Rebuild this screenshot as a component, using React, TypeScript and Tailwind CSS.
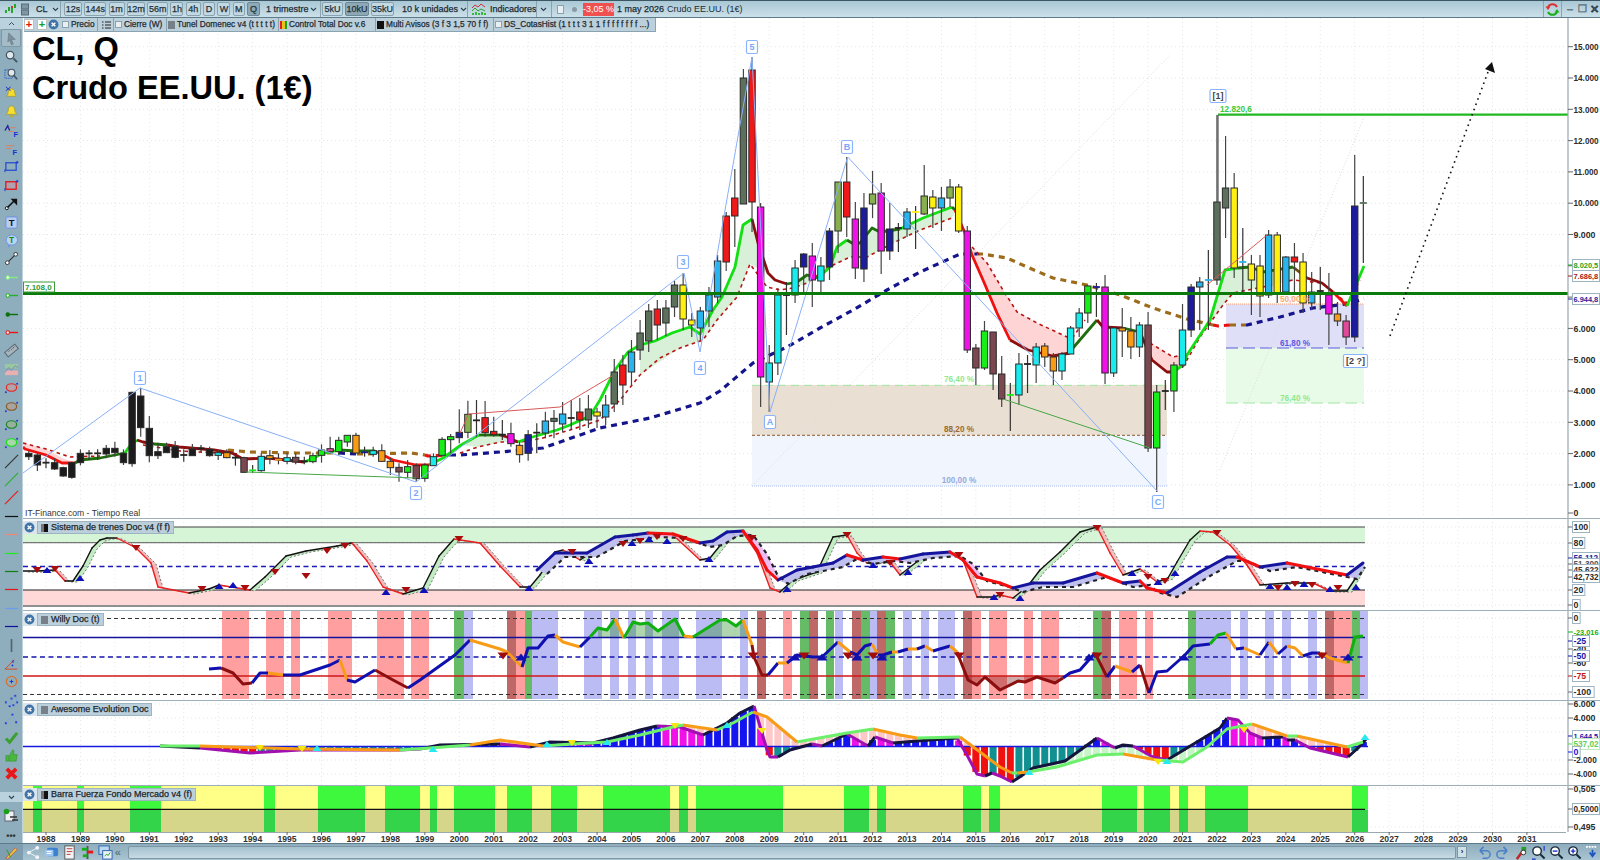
import React from "react";

type P = number[];
const X = (i: number) => 46 + i * 8.61;
const YEARX = (y: number) => 46 + (y - 1988) * 34.44;
const C: Record<string, string> = { k: "#1c1c1c", r: "#f01818", g: "#17ee17", c: "#18ecec", b: "#1c1c9c", m: "#f010e8", y: "#fff010", o: "#f89c18", l: "#28b4ec", d: "#5c705c", D: "#88b050", M: "#7c4850", p: "#e04a98" };

const Z10: [number, number, number, number, string][] = [
  [483, 490, 500, 510, "k"], [490, 495, 525, 543, "k"], [505, 518, 521, 535, "k"], [505, 518, 537, 540, "k"], [530, 533, 558, 560, "k"], [515, 518, 562, 566, "k"], [478, 490, 518, 526, "k"], [480, 490, 491, 510, "k"], [478, 490, 491, 510, "k"], [465, 475, 492, 505, "k"], [455, 475, 488, 500, "k"], [478, 490, 518, 525, "k"], [305, 307, 521, 530, "k"], [293, 318, 413, 440, "k"], [378, 415, 497, 517, "k"], [458, 485, 497, 507, "k"], [458, 470, 488, 488, "k"], [453, 470, 502, 505, "k"], [478, 495, 498, 515, "k"], [462, 477, 497, 497, "k"], [465, 475, 476, 485, "k"], [470, 478, 497, 500, "k"],
  [480, 488, 496, 510, "c"], [478, 488, 503, 505, "o"], [490, 503, 505, 527, "k"], [500, 503, 547, 547, "M"], [525, 541, 547, 549, "g"], [490, 499, 542, 545, "c"], [480, 497, 506, 523, "o"], [490, 509, 512, 523, "o"], [488, 503, 514, 523, "c"], [490, 502, 516, 523, "M"], [500, 514, 517, 523, "k"], [488, 497, 515, 520, "g"], [463, 480, 496, 518, "g"], [440, 476, 485, 490, "p"], [440, 451, 485, 495, "g"], [435, 436, 456, 470, "g"], [428, 436, 489, 490, "o"], [470, 487, 493, 500, "b"], [470, 482, 493, 500, "c"], [463, 482, 514, 515, "o"], [503, 514, 533, 555, "o"], [520, 532, 546, 575, "M"], [510, 530, 547, 565, "g"], [520, 527, 566, 575, "M"], [520, 525, 565, 575, "g"], [490, 500, 527, 527, "c"], [442, 448, 496, 500, "g"], [432, 440, 449, 490, "g"], [358, 427, 443, 460, "b"], [332, 373, 427, 445, "D"], [330, 391, 393, 440, "k"], [333, 383, 428, 440, "r"], [380, 424, 434, 440, "r"], [390, 434, 436, 450, "k"], [398, 431, 461, 470, "m"], [455, 466, 494, 518, "o"], [420, 434, 490, 512, "b"], [400, 428, 431, 490, "k"], [365, 393, 429, 445, "l"], [360, 385, 394, 445, "d"],
];
const REST: [number, number, number, number, string][] = [
  [402, 414, 424, 432, "l"], [400, 418, 419, 430, "k"], [398, 412, 420, 430, "r"], [395, 409, 420, 428, "d"], [408, 412, 416, 428, "y"], [395, 405, 417, 425, "l"], [359, 372, 404, 412, "d"], [355, 365, 385, 405, "r"], [340, 352, 372, 385, "l"], [320, 333, 350, 360, "d"], [304, 311, 341, 352, "d"], [300, 309, 325, 340, "r"], [300, 308, 323, 336, "d"],
  [281, 285, 307, 317, "d"], [273, 285, 319, 330, "y"], [313, 320, 325, 337, "y"], [307, 311, 328, 340, "l"], [287, 295, 311, 327, "l"], [255, 261, 297, 303, "l"], [212, 216, 262, 271, "r"], [169, 198, 216, 247, "r"], [69, 78, 204, 204, "d"], [57, 70, 202, 232, "r"], [203, 207, 377, 407, "m"], [345, 363, 382, 412, "c"], [288, 295, 363, 375, "c"], [282, 295, 296, 335, "k"], [260, 268, 295, 303, "c"], [253, 254, 267, 295, "b"], [243, 256, 280, 307, "m"], [257, 266, 281, 292, "c"],
  [228, 231, 267, 280, "b"], [182, 182, 231, 253, "D"], [157, 182, 217, 237, "r"], [202, 219, 268, 279, "m"], [193, 208, 269, 282, "b"], [171, 194, 204, 218, "D"], [183, 193, 251, 274, "m"], [203, 229, 251, 260, "b"], [223, 228, 230, 252, "k"], [208, 212, 229, 237, "l"], [206, 212, 214, 249, "y"], [165, 196, 214, 215, "D"], [190, 197, 208, 228, "y"], [187, 198, 208, 231, "l"], [179, 187, 198, 207, "D"], [184, 187, 231, 233, "y"], [226, 231, 350, 353, "m"],
  [344, 348, 368, 385, "M"], [321, 331, 368, 370, "g"], [332, 332, 374, 390, "M"], [356, 374, 399, 407, "M"], [383, 395, 397, 431, "g"], [353, 364, 395, 405, "c"], [355, 364, 365, 393, "k"], [343, 347, 365, 383, "c"], [343, 346, 357, 367, "o"], [353, 357, 371, 385, "o"], [352, 354, 371, 380, "c"], [326, 328, 354, 345, "c"], [308, 313, 328, 337, "c"], [285, 286, 313, 323, "g"], [283, 287, 288, 317, "b"], [275, 287, 373, 384, "m"], [327, 328, 373, 377, "c"], [308, 328, 331, 357, "o"], [317, 331, 347, 359, "o"], [322, 325, 347, 357, "c"], [312, 325, 448, 452, "M"], [385, 392, 448, 492, "g"], [380, 391, 392, 410, "k"], [362, 365, 391, 412, "g"], [304, 330, 365, 368, "c"],
  [284, 287, 330, 337, "b"], [277, 282, 287, 330, "l"], [250, 280, 282, 330, "l"], [115, 202, 280, 285, "d"], [136, 188, 208, 238, "d"], [173, 188, 268, 278, "y"], [228, 262, 264, 295, "l"], [255, 264, 280, 315, "y"], [255, 266, 296, 317, "y"], [230, 235, 295, 298, "l"], [232, 235, 293, 303, "y"], [256, 257, 292, 294, "l"], [243, 257, 262, 293, "r"], [253, 262, 303, 313, "y"], [272, 292, 303, 310, "l"], [267, 291, 293, 310, "k"], [273, 295, 314, 345, "m"], [302, 314, 321, 326, "o"], [315, 321, 337, 345, "p"], [155, 206, 337, 342, "b"], [176, 203, 205, 263, "d"],
];
const CANDLES = [...Z10.map(([a, b, c, d, e]) => [290 + a / 3, 290 + b / 3, 290 + c / 3, 290 + d / 3, e] as [number, number, number, number, string]), ...REST];

const DG = "#1f6e0c", DR = "#8c0f0f", GR = "#12e012", RD = "#f01010", BR = "#6b4a10";
const TUNNEL: [string, P][] = [
  [RD, [23, 447, 25, 449, 46, 455, 62, 463, 75, 463]], [DG, [80, 460, 100, 458, 125, 453]], [GR, [129, 447, 137, 440]], [DR, [143, 442, 154, 444]], [DG, [168, 445]], [DR, [179, 447, 214, 450, 232, 453, 243, 459, 268, 458, 304, 462]], [GR, [314, 458, 321, 454, 339, 450]], [DG, [357, 451, 375, 451]], [RD, [393, 460, 416, 465, 429, 465]], [GR, [443, 458, 461, 445, 479, 435]], [DG, [500, 435]], [DR, [507, 437, 518, 442]], [GR, [529, 438, 557, 430, 570, 425, 590, 416, 600, 400, 615, 370, 628, 352, 640, 345, 655, 341, 672, 333, 690, 327, 700, 334, 713, 310, 722, 297, 735, 267, 743, 225, 752, 219]], [DR, [758, 243, 768, 273, 775, 280, 787, 284]], [DG, [797, 282, 807, 275, 818, 278]], [GR, [830, 267, 837, 247, 847, 240]], [DG, [852, 243, 860, 243, 872, 228, 880, 232, 900, 229]], [GR, [923, 218, 952, 207]], [DG, [955, 210]], [RD, [965, 233, 972, 255, 983, 280, 997, 313, 1010, 340]], [DR, [1028, 350, 1053, 356, 1070, 353]], [DG, [1073, 348, 1097, 320]], [DR, [1103, 327, 1123, 328]], [DG, [1140, 332]], [DR, [1152, 360, 1167, 372, 1173, 372]], [GR, [1183, 365, 1187, 355, 1210, 320, 1225, 270, 1238, 268]], [DG, [1250, 267, 1263, 272, 1293, 267]], [BR, [1307, 278]], [DR, [1322, 283, 1333, 292]], [RD, [1347, 306]], [GR, [1353, 292, 1364, 266]],
];
const TUN_D: P[] = [
  [23, 443, 46, 449, 70, 457, 100, 456], [143, 445, 180, 451, 240, 454], [460, 453, 478, 447, 500, 442, 521, 442, 543, 438, 570, 430, 600, 420, 620, 400, 640, 375, 660, 358, 680, 348, 703, 340, 717, 320, 737, 297, 750, 264, 767, 287, 780, 290, 793, 288, 807, 283, 827, 268, 850, 257, 867, 257, 893, 243, 920, 230, 952, 218],
  [972, 247, 987, 263, 1003, 290, 1017, 312, 1037, 323, 1067, 337, 1073, 337, 1085, 320], [1150, 343, 1173, 357, 1183, 355], [1183, 367, 1200, 337, 1210, 323, 1223, 305, 1233, 293, 1263, 287, 1293, 280, 1322, 283, 1347, 303, 1360, 280],
];
const FILLS: [string, P][] = [
  ["#d8efd8", [640, 345, 655, 341, 672, 333, 690, 327, 700, 334, 713, 310, 722, 297, 735, 267, 743, 225, 752, 219, 758, 243, 767, 273, 750, 264, 737, 297, 717, 320, 703, 340, 680, 348, 640, 375]],
  ["#d8efd8", [830, 267, 837, 247, 847, 240, 860, 243, 872, 228, 880, 232, 900, 229, 923, 218, 952, 207, 955, 210, 952, 218, 920, 230, 893, 243, 867, 257, 850, 257, 827, 268, 807, 283, 793, 288, 797, 282, 807, 275, 818, 278]],
  ["#ffd4d4", [972, 255, 983, 280, 997, 313, 1010, 340, 1028, 350, 1053, 356, 1070, 353, 1067, 337, 1037, 323, 1017, 312, 1003, 290, 987, 263, 973, 247]],
  ["#ffd4d4", [1152, 360, 1167, 372, 1173, 372, 1183, 365, 1183, 355, 1173, 357, 1150, 343]],
  ["#d8efd8", [1187, 355, 1210, 320, 1225, 270, 1238, 268, 1250, 267, 1263, 272, 1293, 267, 1293, 280, 1263, 287, 1233, 293, 1223, 305, 1210, 323, 1200, 337]],
  ["#ffd4d4", [1322, 283, 1333, 292, 1347, 306, 1360, 280, 1347, 303]],
  ["#d8efd8", [461, 445, 479, 435, 500, 435, 518, 442, 500, 442, 478, 447]],
  ["#ffd4d4", [23, 447, 46, 455, 62, 463, 75, 463, 62, 458, 46, 449, 23, 443]],
];
const NAVY = "#14148c";
const EMA: [string, P][] = [
  ["#9c6c1c", [228, 450, 250, 452, 296, 453, 339, 453]], [NAVY, [357, 454]], ["#9c6c1c", [411, 453, 425, 455]], ["#e81010", [428, 456, 450, 455]], [NAVY, [460, 455, 500, 452, 543, 448, 600, 428, 650, 418, 700, 403, 720, 391, 753, 363, 787, 347, 820, 328, 853, 310, 887, 290, 920, 272, 960, 254, 977, 254]], ["#9c6c1c", [983, 254, 1007, 258, 1027, 267, 1053, 278, 1087, 285, 1120, 295, 1153, 308, 1187, 319, 1213, 325]], ["#e81010", [1218, 326, 1230, 325]], ["#9c6c1c", [1246, 325]], [NAVY, [1247, 325, 1280, 317, 1313, 308, 1347, 304, 1364, 299]],
];

const poly = (p: P) => { const o: string[] = []; for (let i = 0; i < p.length; i += 2) o.push(p[i] + "," + p[i + 1]); return o.join(" "); };
const chainPts = (c: [string, P][]) => c.reduce<P>((a, s) => a.concat(s[1]), []);
function Chain({ items, w, dash }: { items: [string, P][]; w: number; dash?: string }) {
  let last: P = [];
  return <>{items.map(([col, pts], i) => { const all = [...last, ...pts]; last = pts.slice(-2); return <polyline key={i} points={poly(all)} fill="none" stroke={col} strokeWidth={w} strokeDasharray={dash} strokeLinejoin="round" />; })}</>;
}
function Tri({ x, y, c, up, s = 4.5 }: { x: number; y: number; c: string; up?: boolean; s?: number }) {
  const h = s * 1.3;
  return <polygon points={up ? `${x - s},${y + h / 2} ${x + s},${y + h / 2} ${x},${y - h / 2}` : `${x - s},${y - h / 2} ${x + s},${y - h / 2} ${x},${y + h / 2}`} fill={c} />;
}
function Grid({ top, bottom, ys }: { top: number; bottom: number; ys: number[] }) {
  const yrs: number[] = []; for (let y = 1988; y <= 2031; y++) yrs.push(y);
  return <g stroke="#e3e6e8" strokeWidth="1" strokeDasharray="1 3">
    {yrs.map((y) => <line key={y} x1={YEARX(y)} x2={YEARX(y)} y1={top} y2={bottom} />)}
    {ys.map((y) => <line key={y} x1="23" x2="1568" y1={y} y2={y} />)}
  </g>;
}
function Ax({ y, t, c = "#2c2c2c", box, tick = "#666", bold = true }: { y: number; t: string; c?: string; box?: string; tick?: string; bold?: boolean }) {
  const fs = t.length > 6 ? 7.4 : t.length === 6 ? 8.2 : 8.8;
  const w = t.length * fs * 0.53 + 3;
  return <g>
    <line x1="1568" x2="1573" y1={y} y2={y} stroke={tick} strokeWidth="1" />
    {box && <rect x="1572.5" y={y - 5.5} width={Math.min(w, 27)} height="11" fill="#fff" stroke={box} strokeWidth="1" />}
    <text x="1573.5" y={y + 3.2} fontSize={fs} fontWeight={bold ? 700 : 400} fill={c}>{t}</text>
  </g>;
}
function AxisLine({ top, bottom }: { top: number; bottom: number }) {
  return <line x1="1568" x2="1568" y1={top} y2={bottom} stroke="#9aa8b0" strokeWidth="1.2" />;
}
function Label({ x, y, t, w = 11 }: { x: number; y: number; t: string; w?: number }) {
  return <g>
    <rect x={x - w / 2} y={y - 6.5} width={w} height="13" fill="#fff" stroke="#8ab4ff" strokeWidth="1.2" rx="1.5" />
    <text x={x} y={y + 3} textAnchor="middle" fontSize="9" fontWeight="700" fill={t.startsWith("[") ? "#444" : "#7aa8f8"}>{t}</text>
  </g>;
}

function MainChart() {
  const ticks = [15, 14, 13, 12, 11, 10, 9, 8, 7, 6, 5, 4, 3, 2, 1];
  const Y = (k: number) => 46.7 + (15 - k) * 31.3;
  return <svg width="1577" height="500" viewBox="23 18 1577 500" className="block">
    <Grid top={18} bottom={518} ys={ticks.map(Y)} />
    <rect x="752" y="385" width="415" height="50" fill="#e9dfd3" />
    <rect x="752" y="435" width="415" height="51" fill="#f1f5fd" />
    <rect x="1226" y="304" width="138" height="44" fill="#dfdff8" />
    <rect x="1226" y="348" width="138" height="55" fill="#e8fbe8" />
    <line x1="752" x2="1167" y1="385.3" y2="385.3" stroke="#9fe89f" strokeDasharray="8 5" />
    <line x1="752" x2="1167" y1="435.3" y2="435.3" stroke="#8c5a2a" strokeDasharray="3 2" />
    <line x1="752" x2="1167" y1="486" y2="486" stroke="#a8c0ee" strokeDasharray="1 1" />
    <line x1="1226" x2="1364" y1="304" y2="304" stroke="#f8a070" strokeDasharray="1 1" />
    <line x1="1226" x2="1364" y1="348" y2="348" stroke="#5a5ae0" strokeDasharray="12 5" />
    <line x1="1226" x2="1364" y1="403" y2="403" stroke="#9fe89f" strokeDasharray="12 5" />
    <line x1="752" y1="486" x2="1170" y2="55" stroke="#dcdcdc" strokeDasharray="1 2" />
    <line x1="1220" y1="470" x2="1364" y2="117" stroke="#dcdcdc" strokeDasharray="1 2" />
    {FILLS.map(([c, p], i) => <polygon key={i} points={poly(p)} fill={c} />)}
    <Chain items={EMA} w={3.2} dash="6 5" />
    {TUN_D.map((p, i) => <polyline key={i} points={poly(p)} fill="none" stroke="#b81414" strokeWidth="1.6" strokeDasharray="3.5 3.5" />)}
    <Chain items={TUNNEL} w={2.8} />
    {CANDLES.map(([hi, top, bot, lo, c], i) => {
      const x = X(i - 2); const doji = bot - top < 2.5;
      return <g key={i}>
        <line x1={x} x2={x} y1={hi} y2={lo} stroke={doji ? "#333" : "#444"} strokeWidth="1.2" />
        {doji ? <line x1={x - 3.5} x2={x + 3.5} y1={top} y2={top} stroke={c === "k" ? "#222" : C[c]} strokeWidth="1.8" /> : <rect x={x - 3.2} y={top} width="6.4" height={bot - top} fill={C[c]} stroke="#2a2a2a" strokeWidth="1" />}
      </g>;
    })}
    <polyline points={poly([23, 473, 140, 388, 416, 482, 684, 273, 700, 352, 752, 57, 770, 412, 847.7, 157, 1158, 492])} fill="none" stroke="#88b0f8" strokeWidth="1" />
    <polyline points={poly([460, 433, 468.6, 414, 560, 407, 612, 376])} fill="none" stroke="#d85858" strokeWidth="1" />
    <line x1="1207" y1="285" x2="1267" y2="235" stroke="#d85858" strokeWidth="1" />
    <line x1="246" y1="472" x2="416" y2="478" stroke="#48a848" strokeWidth="1" />
    <line x1="1003" y1="399" x2="1150" y2="448" stroke="#48a848" strokeWidth="1" />
    <line x1="23" x2="1568" y1="293.5" y2="293.5" stroke="#0b7a0b" strokeWidth="3" />
    <line x1="1218" x2="1568" y1="114.7" y2="114.7" stroke="#22b822" strokeWidth="2.2" />
    <line x1="1218" x2="1218" y1="115" y2="202" stroke="#555" strokeWidth="1.2" />
    <line x1="1390" y1="336" x2="1488" y2="72" stroke="#111" strokeWidth="1.6" strokeDasharray="1.6 4" />
    <polygon points="1492,62 1495,73 1485,69" fill="#111" />
    <g fontSize="8.2" fontWeight="700">
      <text x="959" y="382" textAnchor="middle" fill="#8fe88f">76,40 %</text>
      <text x="959" y="432" textAnchor="middle" fill="#9a6a30">88,20 %</text>
      <text x="959" y="483" textAnchor="middle" fill="#96aadd">100,00 %</text>
      <text x="1295" y="302" textAnchor="middle" fill="#f8a878">50,00 %</text>
      <text x="1295" y="346" textAnchor="middle" fill="#5a5ae0">61,80 %</text>
      <text x="1295" y="401" textAnchor="middle" fill="#8fe88f">76,40 %</text>
      <text x="1220" y="112" fill="#3cc83c">12.820,6</text>
    </g>
    <Label x={140} y={378} t="1" /><Label x={416} y={493} t="2" /><Label x={683} y={262} t="3" /><Label x={700} y={368} t="4" /><Label x={752} y={47} t="5" /><Label x={770} y={422} t="A" /><Label x={847} y={147} t="B" /><Label x={1158} y={502} t="C" />
    <Label x={1218} y={96} t="[1]" w={16} /><Label x={1355.5} y={361} t="[2 ?]" w={24} />
    <rect x="23.5" y="282" width="31" height="10" fill="#fff" stroke="#3c9a3c" />
    <text x="25" y="290" fontSize="8" fontWeight="700" fill="#2f9a2f">7.108,0</text>
    <text x="32" y="60" fontSize="32.6" fontWeight="700" fill="#000">CL, Q</text>
    <text x="32" y="99" fontSize="32.6" fontWeight="700" fill="#000">Crudo EE.UU. (1€)</text>
    <text x="25" y="516" fontSize="8.6" fill="#333">IT-Finance.com - Tiempo Real</text>
    <AxisLine top={18} bottom={518} />
    {ticks.map((k) => <Ax key={k} y={Y(k)} t={k + ".000"} />)}
    <Ax y={513} t="0" />
    <Ax y={265} t="8.020,5" c="#1ba31b" box="#9db4c2" tick="#1ba31b" />
    <Ax y={276} t="7.686,8" c="#a02020" box="#9db4c2" tick="#a02020" />
    <Ax y={299} t="6.944,8" c="#24249c" box="#9db4c2" tick="#24249c" />
  </svg>;
}

const FAST: P = [23, 571, 37, 571, 55, 570, 65, 581, 73, 581, 83, 566, 92, 548, 100, 540, 107, 538, 117, 538, 136, 548, 151, 563, 158, 587, 189, 593, 209, 589, 219, 585, 250, 590, 265, 577, 286, 556, 306, 551, 337, 546, 352, 543, 367, 561, 383, 587, 403, 594, 423, 588, 439, 556, 454, 539, 480, 543, 500, 566, 520, 587, 530, 587, 540, 575, 555, 552, 563, 550, 580, 560, 588, 555, 603, 550, 617, 538, 633, 538, 647, 533, 673, 535, 700, 560, 710, 558, 727, 537, 743, 532, 757, 553, 770, 588, 780, 592, 793, 580, 817, 572, 833, 537, 847, 535, 857, 553, 867, 563, 890, 562, 900, 575, 923, 557, 950, 552, 963, 560, 977, 597, 993, 597, 1000, 595, 1013, 598, 1027, 587, 1040, 570, 1060, 552, 1080, 532, 1097, 527, 1110, 553, 1123, 575, 1140, 569, 1157, 582, 1168, 578, 1177, 562, 1190, 540, 1200, 531, 1213, 532, 1230, 545, 1247, 565, 1260, 585, 1287, 583, 1313, 583, 1330, 591, 1347, 591, 1363, 567];
const SLOW: P = [537, 570, 555, 553, 573, 553, 587, 553, 615, 537, 633, 535, 648, 533, 673, 534, 700, 543, 713, 541, 727, 532, 743, 531, 757, 550, 767, 570, 778, 580, 797, 570, 813, 567, 833, 563, 847, 555, 863, 560, 883, 557, 900, 559, 923, 554, 950, 552, 963, 560, 977, 577, 1000, 583, 1013, 588, 1033, 583, 1063, 583, 1097, 573, 1123, 583, 1140, 581, 1147, 588, 1167, 593, 1200, 572, 1227, 557, 1237, 557, 1260, 567, 1287, 563, 1347, 575, 1363, 563];
const SIS_DOWN: P = [37, 570, 55, 569, 136, 548, 202, 589, 245, 588, 275, 572, 306, 576, 327, 551, 345, 546, 459, 539, 406, 590, 572, 552, 623, 544, 640, 541, 657, 537, 683, 539, 752, 538, 847, 535, 890, 563, 959, 555, 1000, 595, 1097, 528, 1148, 577, 1165, 581, 1217, 533, 1278, 588, 1295, 584, 1312, 585, 1338, 588];
const SIS_UP: P = [47, 570, 80, 578, 219, 586, 233, 585, 386, 592, 424, 590, 529, 588, 589, 561, 632, 543, 649, 539, 667, 541, 709, 559, 787, 589, 873, 565, 908, 572, 994, 597, 1020, 598, 1132, 573, 1158, 582, 1175, 573, 1270, 586, 1287, 587, 1304, 584, 1330, 589, 1356, 587];

function Ribbon({ p, dx, dy, up, down, line, lineW, dashC, dashW, dash, upLine }: { p: P; dx: number; dy: number; up: string; down: string; line: string; lineW: number; dashC: string; dashW: number; dash: string; upLine: string }) {
  const segs: JSX.Element[] = [], quads: JSX.Element[] = [], sh: P = [];
  for (let i = 0; i < p.length; i += 2) { sh.push(Math.min(p[i] + dx, 1365), p[i + 1] + dy); }
  for (let i = 0; i + 3 < p.length; i += 2) {
    const fall = p[i + 3] > p[i + 1];
    quads.push(<polygon key={i} points={poly([p[i], p[i + 1], p[i + 2], p[i + 3], sh[i + 2], sh[i + 3], sh[i], sh[i + 1]])} fill={fall ? down : up} />);
    segs.push(<line key={i} x1={p[i]} y1={p[i + 1]} x2={p[i + 2]} y2={p[i + 3]} stroke={fall ? line : upLine} strokeWidth={lineW} strokeLinecap="round" />);
  }
  return <>{quads}<polyline points={poly(sh)} fill="none" stroke={dashC} strokeWidth={dashW} strokeDasharray={dash} />{segs}</>;
}

function Sistema() {
  return <svg width="1577" height="91" viewBox="23 519 1577 91" className="block">
    <Grid top={518} bottom={610} ys={[527, 543, 566, 590, 605]} />
    <rect x="23" y="527" width="1342" height="15.5" fill="#d6f4d6" />
    <rect x="23" y="590" width="1342" height="15" fill="#ffd8d8" />
    <line x1="23" x2="1365" y1="527" y2="527" stroke="#444" />
    <line x1="23" x2="1365" y1="542.7" y2="542.7" stroke="#777" strokeWidth="1.2" />
    <line x1="23" x2="1365" y1="590" y2="590" stroke="#222" />
    <line x1="23" x2="1365" y1="606" y2="606" stroke="#222" />
    <line x1="23" x2="1365" y1="566.5" y2="566.5" stroke="#1a1ab8" strokeWidth="1.4" strokeDasharray="5 3.5" />
    <Ribbon p={FAST} dx={5} dy={1} up="#c2ecc2" down="#f6bcbc" line="#e82020" lineW={1.4} upLine="#111" dashC="#777" dashW={1} dash="2 2" />
    <Ribbon p={SLOW} dx={10} dy={4} up="#c0c0ee" down="#ecbcf2" line="#f01010" lineW={3} upLine="#14149c" dashC="#222" dashW={2.2} dash="4 4" />
    {(() => { const o: JSX.Element[] = []; for (let i = 0; i < SIS_DOWN.length; i += 2) o.push(<Tri key={"d" + i} x={SIS_DOWN[i]} y={SIS_DOWN[i + 1]} c="#a80c0c" />); for (let i = 0; i < SIS_UP.length; i += 2) o.push(<Tri key={"u" + i} up x={SIS_UP[i]} y={SIS_UP[i + 1]} c="#1010b8" />); return o; })()}
    <AxisLine top={518} bottom={610} />
    <Ax y={558} t="56,112" c="#24249c" box="#9db4c2" tick="#24249c" />
    <Ax y={564} t="51,300" c="#555" box="#9db4c2" />
    <Ax y={570} t="45,622" c="#333" box="#9db4c2" />
    <Ax y={527} t="100" box="#9db4c2" /><Ax y={543} t="80" box="#9db4c2" /><Ax y={577} t="42,732" box="#9db4c2" /><Ax y={590} t="20" box="#9db4c2" /><Ax y={605} t="0" box="#9db4c2" />
  </svg>;
}

const LV = "#bcbcf4", PK = "#ff9f9f", GN = "#66bb66", MR = "#bf6868";
const W_BANDS: [number, number, string][] = [
  [222, 249, PK], [266, 284, PK], [291, 300, PK], [328, 352, PK], [377, 404, PK], [411, 429, PK], [454, 464, GN], [464, 473, LV], [507, 516, MR], [516, 525, PK], [525, 532, GN], [532, 558, LV], [584, 602, LV], [610, 619, LV], [628, 636, LV], [645, 653, LV], [662, 679, LV], [696, 722, LV], [740, 748, LV], [757, 766, MR], [783, 792, PK], [800, 809, GN], [809, 818, MR], [826, 834, GN], [835, 843, LV], [852, 861, MR], [861, 870, GN], [870, 877, LV], [877, 886, MR], [886, 895, GN], [903, 912, LV], [921, 929, LV], [938, 955, LV], [963, 972, MR], [972, 981, PK], [989, 1007, PK], [1024, 1033, PK], [1041, 1059, PK], [1093, 1102, GN], [1102, 1111, MR], [1119, 1137, PK], [1145, 1153, PK], [1188, 1196, GN], [1196, 1231, LV], [1240, 1248, LV], [1265, 1274, LV], [1282, 1291, LV], [1308, 1317, LV], [1325, 1334, MR], [1334, 1352, PK], [1352, 1360, GN], [1360, 1368, LV],
];
const WN = "#1010b0", WO = "#f89c18", WG = "#10b010", WR = "#8c0f0f";
const WILLY: [string, P][] = [
  [WN, [209, 669, 221, 668]], [WR, [233, 673, 243, 684, 252, 683]], [WN, [260, 673, 268, 673]], [WO, [283, 675]], [WN, [300, 675, 330, 665, 340, 660]], [WO, [347, 680]], [WN, [355, 682, 375, 670]], [WR, [393, 680, 408, 688]], [WN, [420, 680, 455, 655, 470, 640]], [WO, [500, 649, 507, 652, 522, 667]], [WN, [528, 648, 538, 648, 548, 636, 555, 635]], [WO, [563, 642, 580, 647]], [WN, [590, 637]], [WG, [598, 628, 607, 630, 615, 619]], [WO, [624, 638]], [WG, [633, 622, 640, 624, 648, 623, 658, 631, 675, 619, 684, 636]], [WO, [693, 637]], [WG, [720, 620, 727, 620, 736, 626, 743, 620]], [WO, [752, 645]], [WR, [754, 657, 762, 675, 768, 675]], [WN, [778, 663]], [WO, [787, 663]], [WN, [797, 655, 813, 657, 822, 657, 838, 642]], [WO, [850, 652]], [WN, [857, 655, 865, 646, 872, 644]], [WO, [878, 655]], [WN, [883, 655, 892, 652]], [WO, [898, 652]], [WN, [908, 649]], [WO, [917, 649]], [WN, [925, 646]], [WO, [933, 651]], [WN, [950, 646]], [WO, [957, 652]], [WR, [968, 680, 977, 685, 985, 677, 1000, 690, 1018, 681, 1025, 682, 1037, 677, 1055, 683, 1063, 678]], [WN, [1070, 673, 1080, 670, 1095, 653]], [WR, [1107, 677]], [WN, [1115, 666]], [WO, [1132, 672]], [WN, [1140, 665]], [WR, [1149, 693]], [WN, [1157, 672, 1167, 671, 1185, 655, 1193, 646, 1210, 644]], [WG, [1218, 635, 1226, 633]], [WO, [1236, 649]], [WN, [1244, 648]], [WO, [1260, 655]], [WN, [1269, 642]], [WO, [1278, 654]], [WN, [1287, 646]], [WO, [1295, 648, 1303, 656]], [WN, [1312, 653, 1320, 653]], [WO, [1330, 658, 1348, 663]], [WG, [1355, 637, 1363, 636]],
];
function Willy() {
  return <svg width="1577" height="89" viewBox="23 611 1577 89" className="block">
    <Grid top={610} bottom={700} ys={[618, 637, 657, 676, 694]} />
    {W_BANDS.map(([a, b, c], i) => <rect key={i} x={a} y="611" width={b - a} height="88" fill={c} />)}
    <polygon points={poly([598, 637, 598, 628, 607, 630, 615, 619, 624, 637, 633, 622, 640, 624, 648, 623, 658, 631, 675, 619, 684, 636, 693, 637, 720, 620, 727, 620, 736, 626, 743, 620, 750, 637])} fill="#1a8a1a" fillOpacity=".35" />
    <polygon points={poly([966, 676, 968, 680, 977, 685, 985, 677, 1000, 690, 1018, 681, 1025, 682, 1037, 677, 1055, 683, 1063, 678, 1066, 676])} fill="#7a1010" fillOpacity=".35" />
    <line x1="23" x2="1365" y1="618.5" y2="618.5" stroke="#333" strokeDasharray="4 3" />
    <line x1="23" x2="1365" y1="637.5" y2="637.5" stroke="#12129c" strokeWidth="1.4" />
    <line x1="23" x2="1365" y1="657" y2="657" stroke="#1414b0" strokeWidth="1.4" strokeDasharray="5 3.5" />
    <line x1="23" x2="1365" y1="676" y2="676" stroke="#d01818" strokeWidth="1.4" />
    <line x1="23" x2="1365" y1="694.5" y2="694.5" stroke="#333" strokeDasharray="4 3" />
    <Chain items={WILLY} w={3} />
    {[503, 753, 804, 848, 873, 959, 1097, 1322].map((x) => <Tri key={x} x={x} y={656} c="#a00c0c" s={5.5} />)}
    {[521, 795, 822, 857, 882, 1089, 1184, 1348].map((x) => <Tri key={x} up x={x} y={657} c="#1010b0" s={5.5} />)}
    <AxisLine top={610} bottom={700} />
    <Ax y={649} t="-40" /><Ax y={663} t="-60" />
    <Ax y={618} t="0" box="#9db4c2" /><Ax y={632} t="-23,016" c="#12b012" tick="#12b012" /><Ax y={641} t="-25" c="#1818a8" box="#9db4c2" tick="#1818a8" /><Ax y={656} t="-50" c="#1818a8" box="#9db4c2" tick="#1818a8" /><Ax y={676} t="-75" c="#c01818" box="#9db4c2" tick="#c01818" /><Ax y={692} t="-100" box="#9db4c2" />
  </svg>;
}

const AO = "#f89c18", AG = "#6cf06c", AK = "#14143c", AP = "#a010b0";
const A_FAST: [string, P][] = [
  [AK, [160, 746, 200, 748]], [AP, [250, 753, 300, 750, 400, 750, 420, 749]], [AK, [440, 745, 500, 744]], [AP, [530, 747]], [AK, [550, 742, 593, 743, 613, 738, 640, 730, 657, 726]], [AP, [680, 727, 703, 735]], [AK, [727, 723, 740, 713, 754, 706]], [AP, [767, 750, 770, 757, 778, 757]], [AK, [790, 750, 812, 744]], [AP, [822, 746]], [AK, [847, 734]], [AP, [868, 746]], [AK, [875, 737]], [AP, [893, 743]], [AK, [917, 741, 957, 738]], [AP, [967, 755, 977, 774, 985, 776]], [AK, [992, 773]], [AP, [1000, 776, 1012, 782]], [AK, [1033, 768, 1065, 761, 1097, 738]], [AP, [1115, 748]], [AK, [1123, 745, 1133, 746]], [AP, [1153, 757, 1167, 760]], [AK, [1187, 748, 1220, 728, 1227, 718]], [AP, [1238, 720, 1250, 733, 1262, 738]], [AK, [1283, 737]], [AP, [1287, 740]], [AK, [1295, 740]], [AP, [1310, 748, 1348, 757]], [AK, [1358, 748, 1367, 738]],
];
const A_SLOW: [string, P][] = [
  [AG, [160, 746, 200, 746]], [AO, [300, 749, 400, 750]], [AG, [430, 748, 470, 745]], [AO, [500, 740, 543, 746]], [AG, [572, 744, 607, 742, 640, 735, 673, 727, 683, 725]], [AO, [717, 730]], [AG, [733, 723, 753, 712]], [AO, [767, 717, 797, 742]], [AG, [847, 733, 873, 729]], [AO, [900, 735, 917, 738]], [AG, [960, 737]], [AO, [1000, 767, 1012, 773]], [AG, [1017, 773]], [AO, [1028, 772]], [AG, [1057, 767, 1097, 755, 1123, 754]], [AO, [1157, 760]], [AG, [1183, 762, 1207, 747, 1227, 729, 1252, 724]], [AO, [1287, 736]], [AG, [1297, 736]], [AO, [1347, 747]], [AG, [1363, 742]],
];
const interp = (p: P, x: number) => { for (let i = 0; i + 3 < p.length; i += 2) if (x >= p[i] && x <= p[i + 2]) return p[i + 1] + ((p[i + 3] - p[i + 1]) * (x - p[i])) / (p[i + 2] - p[i] || 1); return 746; };
function Awesome() {
  const f = chainPts(A_FAST), s = chainPts(A_SLOW), bars: JSX.Element[] = [];
  for (let i = 14; i <= 153; i++) {
    const x = X(i), fy = interp(f, x), sy = interp(s, x), prev = interp(f, x - 6), fall = fy > prev;
    const col = fy < 746 ? (fall ? "#f010e8" : "#1414f0") : fall ? "#f01010" : "#109090";
    if (Math.abs(fy - sy) > 1) bars.push(<rect key={"s" + i} x={x - 3.5} width="7" y={Math.min(fy, sy)} height={Math.abs(fy - sy)} fill={sy < fy ? "#ffc8c8" : "#c8f5c8"} />);
    bars.push(<rect key={i} x={x - 3.5} width="7" y={Math.min(fy, 746)} height={Math.abs(fy - 746)} fill={col} />);
  }
  return <svg width="1577" height="84" viewBox="23 701 1577 84" className="block">
    <Grid top={700} bottom={785} ys={[704, 718, 732, 760, 774]} />
    {bars}
    <line x1="23" x2="1368" y1="746.5" y2="746.5" stroke="#1818e0" strokeWidth="1.6" />
    <Chain items={A_FAST} w={3} />
    <Chain items={A_SLOW} w={3} />
    {[[547, 744], [607, 742], [727, 725], [1029, 772], [1167, 761], [1365, 737], [317, 748], [433, 749]].map(([x, y]) => <Tri key={x} up x={x} y={y} c="#28e8f0" s={4.5} />)}
    {[[572, 743], [675, 726], [762, 731], [1158, 762], [1244, 730], [302, 749], [260, 748]].map(([x, y]) => <Tri key={x} x={x} y={y} c="#f4e810" s={4.5} />)}
    <AxisLine top={700} bottom={785} />
    <Ax y={704} t="6.000" /><Ax y={718} t="4.000" /><Ax y={736} t="1.644,5" c="#1818a8" box="#9db4c2" tick="#1818a8" /><Ax y={744} t="537,02" c="#5cd05c" box="#bfe8bf" tick="#5cd05c" /><Ax y={752} t="0" c="#1818e8" box="#9db4c2" tick="#1818e8" /><Ax y={760} t="-2.000" /><Ax y={774} t="-4.000" />
  </svg>;
}

const B_GREEN: [number, number][] = [[33, 42], [77, 84], [130, 161], [264, 275], [318, 365], [385, 420], [430, 437], [454, 495], [507, 532], [551, 577], [603, 670], [679, 688], [696, 783], [844, 869], [877, 886], [963, 981], [989, 1000], [1102, 1137], [1144, 1170], [1179, 1188], [1205, 1248], [1352, 1368]];
function Barra() {
  return <svg width="1577" height="46" viewBox="23 786 1577 46" className="block">
    <Grid top={785} bottom={832} ys={[788, 827]} />
    <rect x="23" y="785" width="1345" height="24.5" fill="#ffff88" />
    <rect x="23" y="809.5" width="1345" height="22.5" fill="#d6d68a" />
    {B_GREEN.map(([a, b]) => <g key={a}><rect x={a} y="785" width={b - a} height="24.5" fill="#3ef83e" /><rect x={a} y="809.5" width={b - a} height="22.5" fill="#34d44a" /></g>)}
    <line x1="23" x2="1365" y1="809.3" y2="809.3" stroke="#111" strokeWidth="1.2" />
    <AxisLine top={785} bottom={832} />
    <Ax y={789} t="0,505" /><Ax y={809} t="0,5000" box="#9db4c2" /><Ax y={827} t="0,495" />
  </svg>;
}
function TimeAxis() {
  const yrs: number[] = []; for (let y = 1988; y <= 2031; y++) yrs.push(y);
  return <svg width="1577" height="11" viewBox="23 832 1577 11" className="block">
    <rect x="23" y="832" width="1577" height="11" fill="#fff" />
    <line x1="23" x2="1566" y1="832.5" y2="832.5" stroke="#9aa8b0" />
    {yrs.map((y) => <g key={y}><line x1={YEARX(y)} x2={YEARX(y)} y1="832" y2="835" stroke="#666" /><text x={YEARX(y)} y="842" textAnchor="middle" fontSize="8.6" fontWeight="700" fill="#333">{y}</text></g>)}
  </svg>;
}

const STROKE = "[-webkit-text-stroke:0.25px_#1d2c34]";
function Close() {
  return <svg width="11" height="11" viewBox="0 0 12 12" className="shrink-0"><circle cx="6" cy="6" r="5.4" fill="#3f74a8" /><path d="M4 4l4 4M8 4l-4 4" stroke="#fff" strokeWidth="1.6" /></svg>;
}
function PanelHead({ swatch, text }: { swatch: React.ReactNode; text: string }) {
  return <div className="absolute left-0 top-[2px] flex items-center h-[13px] gap-[2px] bg-[#dbe6ec] pl-[1px]">
    <Close />
    <div className={"h-[13px] flex items-center gap-[3px] px-[3px] bg-[#bcd0dc] border border-[#9db4c2] text-[9px] text-[#222] whitespace-nowrap leading-none " + STROKE}>{swatch}{text}</div>
  </div>;
}
const Half = () => <span className="w-[7px] h-[8px] bg-[linear-gradient(90deg,#777_50%,#111_50%)]" />;
const Grey = () => <span className="w-[7px] h-[8px] bg-[#778088]" />;

function Btn({ t, w, on }: { t: string; w: number; on?: boolean }) {
  return <div style={{ width: w }} className={"h-[14px] flex items-center justify-center rounded-[2px] border text-[9px] leading-none text-[#243640] " + STROKE + " " + (on ? "bg-[#8ea9b6] border-[#6e8896]" : "bg-[#c2d8e2] border-[#8aa3b0]")}>{t}</div>;
}
const Chev = () => <svg width="7" height="5" viewBox="0 0 7 5" className="shrink-0"><path d="M1 1l2.5 2.5L6 1" stroke="#2e4350" strokeWidth="1.1" fill="none" /></svg>;
const Sep = () => <div className="w-[1px] h-[18px] bg-[#8aa3b0] shrink-0" />;

function TopBar() {
  return <div className={"h-[18px] shrink-0 flex items-center border-t border-[#3b5563] border-b border-b-[#5d7b8a] bg-[linear-gradient(#a9c7d5,#cbe0e9)] text-[#1d2c34] text-[9px] leading-none whitespace-nowrap overflow-hidden " + STROKE}>
    <svg width="14" height="14" viewBox="0 0 14 14" className="ml-[4px] shrink-0"><path d="M2 11v-3M5 9V5M8 11V6M11 6V2" stroke="#19a019" strokeWidth="1.8" /><path d="M8 6V4" stroke="#e02020" strokeWidth="1.8" /></svg>
    <svg width="8" height="13" viewBox="0 0 8 13" className="ml-[3px] shrink-0"><rect x=".5" y="1" width="7" height="5" fill="#7e97a4" stroke="#566c78" /><rect x=".5" y="7" width="7" height="5" fill="#7e97a4" stroke="#566c78" /></svg>
    <span className="ml-[7px] w-[11px]">CL</span>
    <span className="ml-[5px]"><Chev /></span>
    <div className="ml-[1px]"><Sep /></div>
    <div className="flex items-center gap-[2.3px] ml-[3px]">
      <Btn t="12s" w={18} /><Btn t="144s" w={22} /><Btn t="1m" w={16} /><Btn t="12m" w={18} /><Btn t="56m" w={21} /><Btn t="1h" w={13} /><Btn t="4h" w={15} /><Btn t="D" w={12} /><Btn t="W" w={13} /><Btn t="M" w={12} /><Btn t="Q" w={13} on />
    </div>
    <span className="ml-[6px] w-[40px]">1 trimestre</span>
    <span className="ml-[4px]"><Chev /></span>
    <div className="ml-[3px] mr-[1px]"><Sep /></div>
    <div className="flex items-center gap-[2px]"><Btn t="5kU" w={21} /><Btn t="10kU" w={24} on /><Btn t="35kU" w={23} /></div>
    <span className="ml-[8px] w-[54px]">10 k unidades</span>
    <span className="ml-[4px]"><Chev /></span>
    <div className="ml-[0px]"><Sep /></div>
    <svg width="16" height="14" viewBox="0 0 16 14" className="ml-[3px] shrink-0"><path d="M1 6l3-3 3 2 3-3 4 3" stroke="#d03030" fill="none" /><path d="M1 9l3-3 3 3 3-2 4 2" stroke="#2aa02a" fill="none" /><path d="M2 13v-2M5 13v-3M8 13v-2M11 13v-3M14 13v-2" stroke="#18b018" strokeWidth="1.6" /></svg>
    <span className="ml-[3px] w-[44px]">Indicadores</span>
    <div className="ml-[2px]"><Sep /></div>
    <span className="ml-[3px]"><Chev /></span>
    <div className="ml-[4px]"><Sep /></div>
    <div className="ml-[5px] w-[7px] h-[9px] bg-[#e8eef2] border border-[#8aa3b0]" />
    <div className="ml-[8px] w-[5px] h-[5px] rounded-full bg-[#8a9aa4]" />
    <div className="ml-[6px] h-[13px] w-[31px] flex items-center justify-center bg-[#f05050] text-white [-webkit-text-stroke:0]">-3,05 %</div>
    <span className="ml-[3px]">1 may 2026</span>
    <span className="ml-[3px] [-webkit-text-stroke:0]">Crudo EE.UU. (1€)</span>
    <div className="flex-1" />
    <Sep />
    <svg width="15" height="15" viewBox="0 0 15 15" className="mx-[1px] shrink-0"><path d="M12 5A5 5 0 0 0 3 5" stroke="#e03030" strokeWidth="2" fill="none" /><path d="M0.5 4.5h5L3 8z" fill="#e03030" /><path d="M3 10a5 5 0 0 0 9 0" stroke="#18b018" strokeWidth="2" fill="none" /><path d="M9.5 10.5h5L12 7z" fill="#18b018" /></svg>
    <Sep />
    <span className="w-[12px] ml-[2px] text-center font-bold text-[#7e97a4] text-[11px]">–</span>
    <span className="w-[12px] text-center text-[#7e97a4] text-[10px]">❐</span>
    <span className="w-[12px] text-center font-bold text-[#7e97a4] text-[11px]">✕</span>
  </div>;
}

type Ic = React.ReactNode;
const hl = (c: string) => <path d="M1 8h14" stroke={c} strokeWidth="1.3" />;
const pin = (c: string, fill = "#fff") => <><path d="M3 8h12" stroke={c} strokeWidth="1.5" /><circle cx="4" cy="8" r="1.8" fill={fill} stroke={c} strokeWidth="1.1" /></>;
const ell = (c: string, f: string) => <><ellipse cx="8" cy="8" rx="5.5" ry="4" fill={f} stroke={c} strokeWidth="1.3" /><path d="M14 3v2M13 4h2M2 12v2M1 13h2" stroke="#1a2fd0" /></>;
const diag = (c: string) => <path d="M1 15L15 1" stroke={c} strokeWidth="1.2" />;
const ICONS: Ic[] = [
  <path d="M5 2l7 7H8l2 5-2 .8-2-5-2 2z" fill="#7c909c" stroke="#5c7080" strokeWidth=".5" />,
  <><circle cx="6.5" cy="6.5" r="4" fill="#dfe9ee" stroke="#45555f" strokeWidth="1.3" /><path d="M10 10l4 4" stroke="#45555f" strokeWidth="2" /></>,
  <><rect x="1" y="3" width="8" height="9" fill="none" stroke="#2a60d0" strokeDasharray="1.5 1" /><circle cx="8" cy="6" r="3.6" fill="#dfe9ee" stroke="#45555f" strokeWidth="1.2" /><path d="M10.5 9l3.5 4" stroke="#45555f" strokeWidth="1.8" /></>,
  <><path d="M8 3c3 0 3.5 3 3.5 5l1.5 3H3l1.5-3C4.500 6 5 3 8 3z" fill="#f4dc30" stroke="#a08c10" strokeWidth=".6" /><path d="M2 1l5 4M7 1L2 5" stroke="#1a2fd0" /></>,
  <><path d="M8 2c3.200 0 3.500 3.500 3.500 5.500L13.500 11H2.500L4.500 7.500C4.500 5.500 4.800 2 8 2z" fill="#f8e030" stroke="#a08c10" strokeWidth=".6" /><circle cx="8" cy="13" r="1.4" fill="#c8a810" /></>,
  <><path d="M1 8l3-5 2 5" stroke="#14249c" strokeWidth="1.4" fill="none" /><path d="M5 5h8M5 9h5" stroke="#d88060" /><text x="10" y="15" fontSize="8" fontWeight="700" fill="#1a2fd0">F</text></>,
  <><path d="M2 5h9M2 8h6" stroke="#d88060" /><text x="9" y="15" fontSize="8" fontWeight="700" fill="#1a2fd0">F</text></>,
  <><rect x="2" y="4" width="11" height="8" fill="none" stroke="#2a50d0" strokeWidth="1.4" /><path d="M14 2v3M12.500 3.500h3M1 11v3" stroke="#1a2fd0" /></>,
  <><rect x="2" y="4" width="11" height="8" fill="#b0a0b0" stroke="#e01818" strokeWidth="1.4" /><path d="M14 2v3M12.500 3.500h3M1 11v3" stroke="#1a2fd0" /></>,
  <><path d="M2 14l9-9" stroke="#111" strokeWidth="1.6" /><path d="M7 3h7v7z" fill="#111" /><circle cx="3" cy="13" r="1.6" fill="#fff" stroke="#111" /></>,
  <><rect x="2" y="2" width="12" height="12" rx="2" fill="#b9cdf0" stroke="#6a90e0" /><text x="8" y="12" fontSize="10" fontWeight="700" textAnchor="middle" fill="#111">T</text></>,
  <><path d="M8 2a6 5.500 0 1 1-2 10.500L5 15l-.5-3.200A6 5.500 0 0 1 8 2z" fill="#b9d4f0" stroke="#6a90e0" /><text x="8" y="11" fontSize="9" fontWeight="700" textAnchor="middle" fill="#118a11">T</text></>,
  <><path d="M3 13L13 3" stroke="#333" strokeWidth="1.2" /><circle cx="3.500" cy="12.500" r="2" fill="#fff" stroke="#333" /><circle cx="12.500" cy="3.500" r="2" fill="#fff" stroke="#333" /></>,
  pin("#7cf07c"), pin("#28b028"), pin("#0c700c", "#0c700c"), pin("#e81818"),
  <><rect x="1" y="5" width="14" height="6" fill="#a8b4bc" stroke="#55656f" transform="rotate(-40 8 8)" /><path d="M5 9l1-1M8 7l1-1M10 5l1-1" stroke="#333" /></>,
  <><rect x="1" y="2" width="14" height="5" fill="#98c8a0" /><rect x="1" y="9" width="14" height="5" fill="#e8b0b0" /><path d="M1 11l4-5 3 3 4-5 3 2" stroke="#7a8ab8" fill="none" /></>,
  ell("#e82828", "#b0a4a8"), ell("#8a5a30", "#aaa49a"), ell("#1a8a2a", "#98b09c"), ell("#18e018", "#a8d8a8"),
  diag("#333"), diag("#28b028"), diag("#e81818"),
  hl("#111"), hl("#f08878"), hl("#18f018"), hl("#108010"), hl("#e01818"), hl("#6a9cf0"), hl("#10109c"),
  <path d="M8 1v14" stroke="#55656f" strokeWidth="1.8" />,
  <><path d="M1 14l10-10M1 14h13" stroke="#d84820" /><text x="8" y="11" fontSize="7" fill="#1a2fd0" fontWeight="700">°</text><circle cx="9" cy="10" r="1" fill="#1a2fd0" /></>,
  <><circle cx="8" cy="8" r="5.500" fill="none" stroke="#d87030" strokeWidth="1.3" /><path d="M8 6v4M6 8h4" stroke="#1a2fd0" /></>,
  <><g fill="#1a2fd0"><rect x="1" y="9" width="2" height="2" /><rect x="5" y="13" width="2" height="2" /><rect x="7" y="5" width="2" height="2" /><rect x="11" y="2" width="2" height="2" /><rect x="13" y="9" width="2" height="2" /><rect x="9" y="12" width="2" height="2" /></g><path d="M2 10l4 4 2-8 4-3 2 7-4 3" stroke="#6a9cf0" fill="none" strokeDasharray="1 1" /></>,
  <><g fill="#1a2fd0"><rect x="1" y="12" width="2" height="2" /><rect x="8" y="3" width="2" height="2" /><rect x="12" y="11" width="2" height="2" /></g><path d="M2 13l7-9 4 8" stroke="#6a9cf0" fill="none" strokeDasharray="1 1" /></>,
  <path d="M2 9l4 4 8-10" stroke="#3aa030" strokeWidth="3.2" fill="none" />,
  <path d="M2 8h3v6H2zM6 8l3-6c2 0 2 2 1 5h4l-1 7H6z" fill="#4ab83c" stroke="#2a8a22" strokeWidth=".5" />,
  <path d="M3 3l10 10M13 3L3 13" stroke="#e81818" strokeWidth="4" />,
];

function LeftBar() {
  return <div className="w-[23px] shrink-0 flex flex-col bg-[#8eadbd] border-r border-[#c0d2da]">
    <div className="h-[11px] shrink-0 flex items-center justify-center bg-[#b9d2de]"><svg width="7" height="5" viewBox="0 0 7 5"><path d="M1 4l2.500-2.500L6 4" stroke="#3a5260" fill="none" /></svg></div>
    {ICONS.map((ic, i) => <div key={i} className={"h-[18.4px] flex items-center justify-center shrink-0 " + (i === 0 ? "bg-[#a4bcc8] border border-[#7e97a4] rounded-[2px] mx-[1px]" : "")}><svg width="15" height="15" viewBox="0 0 16 16">{ic}</svg></div>)}
    <div className="h-[10px] shrink-0 flex items-center justify-center bg-[#b9d2de] mt-auto"><Chev /></div>
    <div className="h-[28px] shrink-0 flex items-center justify-center"><svg width="16" height="16" viewBox="0 0 16 16"><rect x="2" y="3" width="9" height="10" fill="#eef2f5" stroke="#667" /><circle cx="3.500" cy="3.500" r="2.800" fill="#18a018" /><path d="M7 9h7M9 12h6" stroke="#333" strokeWidth="1.4" /></svg></div>
    <div className="h-[13px] shrink-0 flex items-center justify-center text-[9px] font-bold leading-none text-[#333]">•••</div>
  </div>;
}

const BI = ({ c }: { c: Ic }) => <svg width="15" height="15" viewBox="0 0 16 16" className="shrink-0">{c}</svg>;
function BottomBar() {
  const lens = (inner: Ic) => <><circle cx="6.500" cy="6.500" r="4.500" fill="#fff" stroke="#1a2a3a" strokeWidth="1.5" /><path d="M10 10l4.500 4.500" stroke="#1a2a3a" strokeWidth="2.200" />{inner}</>;
  return <div className="h-[17px] shrink-0 flex items-center bg-[linear-gradient(#8eadbd,#a9c5d2)] border-t border-[#5d7b8a]">
    <div className="w-[23px] h-full flex items-center justify-center bg-[#7f9fb0]"><BI c={<><path d="M2 14L12 3l2 2L4 15z" fill="#e8c840" stroke="#c03030" strokeWidth=".6" /><path d="M3 5l4 8" stroke="#28a028" /></>} /></div>
    <div className="flex items-center gap-[3px] ml-[3px]">
      <BI c={<><circle cx="3" cy="8" r="2" fill="#f2f5f7" /><circle cx="12" cy="3" r="2" fill="#f2f5f7" /><circle cx="12" cy="13" r="2" fill="#f2f5f7" /><path d="M3 8l9-5M3 8l9 5" stroke="#f2f5f7" /></>} />
      <BI c={<><rect x="3" y="3" width="12" height="9" rx="2" fill="#3c80d0" /><rect x="1" y="5" width="9" height="7" rx="1" fill="#9cc4f0" /><path d="M3 7h5M3 9h5" stroke="#fff" /></>} />
      <BI c={<><rect x="3" y="1" width="10" height="14" fill="#f2f5f7" stroke="#555" /><path d="M5 4h6M5 7h6M5 10h4" stroke="#c03030" /></>} />
      <BI c={<><rect x="7" y="1" width="2" height="14" fill="#555" /><rect x="2" y="3" width="6" height="3" fill="#18b018" /><rect x="8" y="6" width="6" height="3" fill="#e01818" /><rect x="3" y="10" width="5" height="3" fill="#18b018" /></>} />
      <BI c={<><rect x="1" y="1" width="11" height="9" fill="#bcd8f0" stroke="#2a60b0" /><rect x="5" y="6" width="10" height="9" fill="#e8f0f8" stroke="#2a60b0" /><path d="M7 12l2-2 2 1 2-3" stroke="#18a018" fill="none" /></>} />
    </div>
    <span className="ml-[2px] w-[12px] text-[11px] leading-none text-[#44606e]">«</span>
    <div className="h-[13px] w-[1343px] mx-[1px] rounded-[2px] bg-[linear-gradient(#a4c0ce,#c7dbe4)] border border-[#7e97a4]" />
    <div className="h-[12px] w-[10px] flex items-center justify-center bg-[#d0e0e8] border border-[#7e97a4] text-[8px] font-bold leading-none text-[#222]">›</div>
    <div className="flex items-center gap-[3px] ml-[10px]">
      <BI c={<path d="M3 6h7a4 4 0 0 1 0 8H6M3 6l4-4M3 6l4 4" stroke="#4a80c8" strokeWidth="1.600" fill="none" />} />
      <BI c={<path d="M13 6H6a4 4 0 0 0 0 8h4M13 6L9 2M13 6l-4 4" stroke="#4a80c8" strokeWidth="1.600" fill="none" />} />
      <BI c={<><path d="M3 14l6-8 2 2-6 8z" fill="#c02828" /><rect x="9" y="2" width="5" height="7" fill="#28a028" /><circle cx="11" cy="8" r="2.500" fill="#fff" stroke="#333" /></>} />
      <BI c={lens(<path d="M14 1v5M1 15h4" stroke="#1a2fd0" strokeWidth="1.200" />)} />
      <BI c={lens(<path d="M4 6.500h5" stroke="#1a2fd0" strokeWidth="1.500" />)} />
      <BI c={lens(<path d="M4 6.500h5M6.500 4v5" stroke="#1a2fd0" strokeWidth="1.500" />)} />
      <BI c={<><path d="M1 2h12" stroke="#fff" strokeWidth="2" strokeDasharray="2 1" /><path d="M8 5v5M5 8l3 4 3-4" stroke="#1a50c0" strokeWidth="1.800" fill="none" /></>} />
    </div>
  </div>;
}

function Legend() {
  const chip = "h-[13px] flex items-center gap-[2px] pl-[1px] bg-[#bcd0dc] border-r border-[#8aa3b0] text-[8.3px] leading-none text-[#1d2c34] whitespace-nowrap shrink-0 " + STROKE;
  const box = <span className="w-[7px] h-[7px] bg-[#e8eef2] border border-[#8aa3b0] shrink-0" />;
  return <div className="absolute left-[1px] top-0 h-[14px] flex items-center border-b border-[#8aa3b0] bg-[#bcd0dc]">
    <span className="w-[10px] h-[11px] flex items-center justify-center bg-[#fff] border border-[#c0c0c0] text-[#e01818] text-[11px] font-bold leading-none">+</span>
    <span className="w-[10px] h-[11px] ml-[3px] flex items-center justify-center bg-[#fff] border border-[#c0c0c0] text-[#18a018] text-[11px] font-bold leading-none">+</span>
    <span className="ml-[1px] mr-[2px]"><Close /></span>
    <div className={chip + " w-[37px]"}>{box}Precio</div>
    <div className={chip + " w-[16px] justify-center"}><svg width="9" height="8" viewBox="0 0 9 8"><path d="M0 1h1.500M3 1h6M0 4h1.500M3 4h6M0 7h1.500M3 7h6" stroke="#222" /></svg></div>
    <div className={chip + " w-[53px]"}>{box}Cierre (W)</div>
    <div className={chip + " w-[112px]"}><span className="w-[7px] h-[8px] bg-[#778088] shrink-0" />Tunel Domenec v4 (t t t t t)</div>
    <div className={chip + " w-[97px]"}><span className="w-[7px] h-[8px] bg-[linear-gradient(90deg,#e02020_33%,#e8c020_33%_66%,#18a018_66%)] shrink-0" />Control Total Doc v.6</div>
    <div className={chip + " w-[118px]"}><span className="w-[7px] h-[8px] bg-[#111] shrink-0" />Multi Avisos (3 f 3 1,5 70 f f)</div>
    <div className={chip + " w-[162px]"}>{box}DS_CotasHist (1 t t t 3 1 1 f f f f f f f f ...)</div>
  </div>;
}

export default function App() {
  return <div className="w-[1600px] h-[860px] flex flex-col overflow-hidden bg-white font-['Liberation_Sans','Arial',sans-serif]">
    <TopBar />
    <div className="flex flex-1 min-h-0">
      <LeftBar />
      <div className="w-[1577px] flex flex-col">
        <div className="relative h-[500px]"><MainChart /><Legend /></div>
        <div className="relative h-[92px] border-t border-[#9db0ba]"><Sistema /><PanelHead swatch={<Half />} text="Sistema de trenes Doc v4 (f f)" /></div>
        <div className="relative h-[90px] border-t border-[#9db0ba]"><Willy /><PanelHead swatch={<Grey />} text="Willy Doc (t)" /></div>
        <div className="relative h-[85px] border-t border-[#9db0ba]"><Awesome /><PanelHead swatch={<Grey />} text="Awesome Evolution Doc" /></div>
        <div className="relative h-[47px] border-t border-[#9db0ba]"><Barra /><PanelHead swatch={<Half />} text="Barra Fuerza Fondo Mercado v4 (f)" /></div>
        <TimeAxis />
      </div>
    </div>
    <BottomBar />
  </div>;
}
